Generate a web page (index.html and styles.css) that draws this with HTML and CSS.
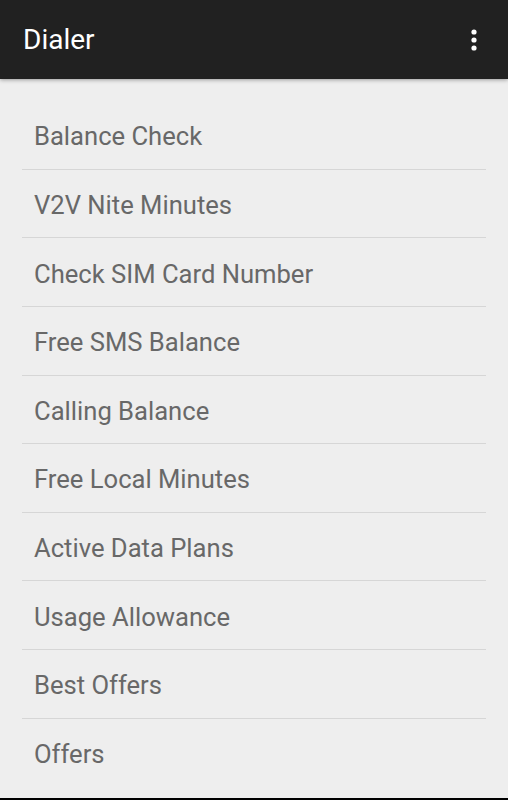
FILE: index.html
```html
<!DOCTYPE html>
<html>
<head>
<meta charset="utf-8">
<link rel="stylesheet" href="styles.css">
</head>
<body>
<div class="app">
  <header class="bar">
    <h1 class="title">Dialer</h1>
    <svg class="overflow" width="10" height="24" viewBox="0 0 10 24" aria-hidden="true">
      <circle cx="5" cy="4" r="2.6" fill="#fff"/>
      <circle cx="5" cy="12" r="2.6" fill="#fff"/>
      <circle cx="5" cy="20" r="2.6" fill="#fff"/>
    </svg>
  </header>
  <ul class="list">
    <li class="item">Balance Check</li>
    <li class="item">V2V Nite Minutes</li>
    <li class="item">Check SIM Card Number</li>
    <li class="item">Free SMS Balance</li>
    <li class="item">Calling Balance</li>
    <li class="item">Free Local Minutes</li>
    <li class="item">Active Data Plans</li>
    <li class="item">Usage Allowance</li>
    <li class="item">Best Offers</li>
    <li class="item">Offers</li>
  </ul>
  <div class="navedge"></div>
</div>
</body>
</html>
```
FILE: styles.css
```css
html, body {
  margin: 0;
  padding: 0;
  height: 100%;
}
body {
  background: #eeeeee;
  font-family: Roboto, "Noto Sans", sans-serif;
}
.app {
  height: 800px;
  display: flex;
  flex-direction: column;
  overflow: hidden;
}
.bar {
  flex: 0 0 79px;
  height: 79px;
  background: #212121;
  display: flex;
  align-items: center;
  justify-content: space-between;
  padding: 0 29px 0 23px;
  box-sizing: border-box;
  box-shadow: 0 1px 4px rgba(0, 0, 0, 0.35);
  position: relative;
  z-index: 1;
}
.title {
  margin: 0;
  color: #ffffff;
  font-weight: 400;
  font-size: 28px;
  letter-spacing: 0;
}
.overflow {
  display: block;
}
.list {
  flex: 1;
  list-style: none;
  margin: 22px 22px 0 22px;
  padding: 0;
}
.item {
  height: 68.625px;
  box-sizing: border-box;
  border-bottom: 1px solid #d6d6d6;
  display: flex;
  align-items: center;
  padding: 3px 0 0 12px;
  font-size: 25.6px;
  color: #686868;
}
.item:last-child {
  border-bottom: none;
}
.navedge {
  flex: 0 0 2px;
  background: #000;
}
```
